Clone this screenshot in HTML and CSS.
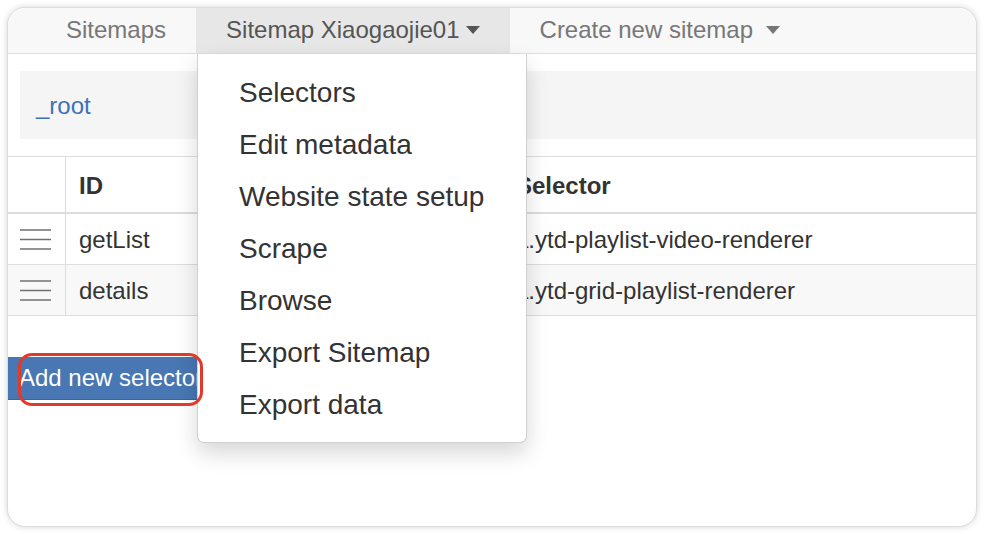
FILE: index.html
```html
<!DOCTYPE html>
<html>
<head>
<meta charset="utf-8">
<link rel="stylesheet" href="styles.css">
</head>
<body>
<div class="window">
  <nav class="navbar">
    <ul class="nav">
      <li class="nav-item">Sitemaps</li>
      <li class="nav-item active">Sitemap Xiaogaojie01<span class="caret caret-tight"></span></li>
      <li class="nav-item">Create new sitemap<span class="caret"></span></li>
    </ul>
  </nav>
  <div class="breadcrumb"><a class="crumb">_root</a></div>
  <table class="selectors">
    <colgroup>
      <col class="c-handle">
      <col class="c-id">
      <col>
    </colgroup>
    <thead>
      <tr><th></th><th>ID</th><th>Selector</th></tr>
    </thead>
    <tbody>
      <tr>
        <td class="handle"><svg width="31" height="21" viewBox="0 0 31 21"><path d="M0 1h31M0 10.5h31M0 20h31" stroke="#707070" stroke-width="1.6" fill="none"/></svg></td>
        <td>getList</td>
        <td>a.ytd-playlist-video-renderer</td>
      </tr>
      <tr class="alt">
        <td class="handle"><svg width="31" height="21" viewBox="0 0 31 21"><path d="M0 1h31M0 10.5h31M0 20h31" stroke="#707070" stroke-width="1.6" fill="none"/></svg></td>
        <td>details</td>
        <td>a.ytd-grid-playlist-renderer</td>
      </tr>
    </tbody>
  </table>
  <button class="btn-primary">Add new selector</button>

  <ul class="dropdown">
    <li>Selectors</li>
    <li>Edit metadata</li>
    <li>Website state setup</li>
    <li>Scrape</li>
    <li>Browse</li>
    <li>Export Sitemap</li>
    <li>Export data</li>
  </ul>
  <div class="annotation"></div>
</div>
</body>
</html>
```

FILE: styles.css
```css
* { box-sizing: border-box; }
html, body {
  margin: 0;
  padding: 0;
  background: #ffffff;
  font-family: "Liberation Sans", Arial, Helvetica, sans-serif;
}
.window {
  position: relative;
  margin: 7px;
  width: 970px;
  height: 520px;
  border: 1px solid #dcdcdc;
  border-radius: 18px;
  overflow: hidden;
  background: #ffffff;
  box-shadow: 0 0 6px rgba(0, 0, 0, 0.16);
}
.navbar {
  height: 46px;
  background: #f8f8f8;
  border-bottom: 1px solid #dedede;
}
.nav {
  list-style: none;
  margin: 0;
  padding: 0 0 0 28px;
  display: flex;
  height: 45px;
}
.nav-item {
  padding: 0 30px;
  line-height: 43px;
  font-size: 24px;
  color: #777777;
  white-space: nowrap;
}
.nav-item.active {
  background: #e7e7e7;
  color: #555555;
}
.caret {
  display: inline-block;
  width: 0;
  height: 0;
  margin-left: 13px;
  vertical-align: middle;
  border-top: 8px solid #777777;
  border-left: 7px solid transparent;
  border-right: 7px solid transparent;
  position: relative;
  top: -2px;
}
.caret-tight {
  margin-left: 6px;
  border-top-color: #555555;
}
.breadcrumb {
  margin: 17px 0 0 12px;
  height: 68px;
  background: #f5f5f5;
  padding-left: 16px;
  line-height: 70px;
  font-size: 24px;
}
.crumb {
  color: #3a72b8;
}
.selectors {
  margin-top: 17px;
  width: 100%;
  table-layout: fixed;
  border-collapse: separate;
  border-spacing: 0;
  font-size: 24px;
  color: #333333;
}
.c-handle { width: 57px; }
.c-id { width: 437px; }
.selectors th {
  height: 58px;
  text-align: left;
  font-weight: bold;
  border-top: 1px solid #dddddd;
  border-bottom: 2px solid #dddddd;
  padding: 3px 12px 0;
  vertical-align: middle;
}
.selectors td {
  height: 51px;
  border-bottom: 1px solid #dddddd;
  padding: 2px 12px 0;
  vertical-align: middle;
  white-space: nowrap;
  overflow: hidden;
}
.selectors th + th,
.selectors td + td {
  border-left: 1px solid #dddddd;
  padding-left: 13px;
}
.selectors td + td + td {
  padding-left: 12px;
}
.selectors td.handle {
  padding: 0 0 0 12px;
  line-height: 0;
}
.selectors tr.alt td {
  background: #f8f8f8;
}
.btn-primary {
  display: block;
  margin-top: 41px;
  height: 43px;
  padding: 0 11px;
  border: 0;
  border-bottom: 1px solid #3b659c;
  background: #4877b3;
  color: #ffffff;
  font-family: "Liberation Sans", Arial, Helvetica, sans-serif;
  font-size: 24px;
  line-height: 42px;
  white-space: nowrap;
}
.dropdown {
  position: absolute;
  left: 189px;
  top: 46px;
  width: 330px;
  margin: 0;
  padding: 13px 0 11px;
  list-style: none;
  background: #ffffff;
  border: 1px solid rgba(0, 0, 0, 0.18);
  border-top: 0;
  border-radius: 0 0 7px 7px;
  box-shadow: 0 10px 22px rgba(0, 0, 0, 0.16);
  z-index: 2;
}
.dropdown li {
  height: 52px;
  line-height: 52px;
  padding-left: 41px;
  font-size: 28px;
  color: #333333;
  white-space: nowrap;
}
.annotation {
  position: absolute;
  left: 10px;
  top: 345px;
  width: 185px;
  height: 53px;
  border: 3px solid #e23a2a;
  border-radius: 14px;
  z-index: 3;
}
```
